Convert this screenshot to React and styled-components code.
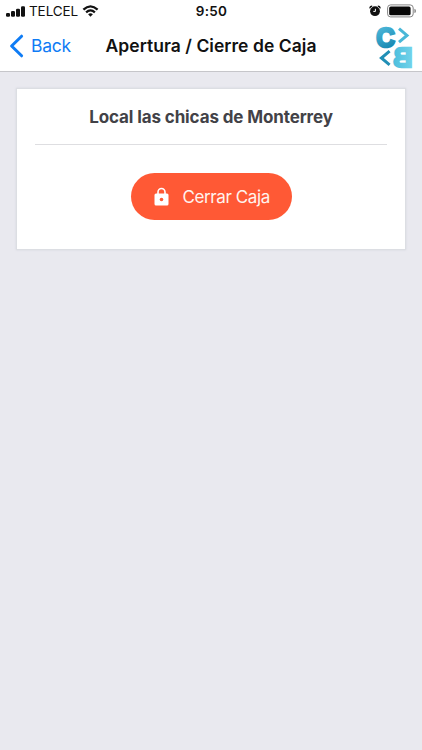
import React from "react";
import styled, { createGlobalStyle } from "styled-components";

const GlobalStyle = createGlobalStyle`
    * {
        box-sizing: border-box;
    }
    body {
        margin: 0;
        background-color: #e9e9ef;
        font-family: Inter, "Liberation Sans", sans-serif;
    }
`

const Screen = styled.div`
    width: 422px;
    height: 750px;
    overflow: hidden;
    background-color: #e9e9ef;
`

const Header = styled.header`
    height: 72px;
    background-color: #fff;
    border-bottom: 1px solid #c6c6ca;
`

const StatusBar = styled.div`
    height: 22px;
    display: grid;
    grid-template-columns: 1fr auto 1fr;
    align-items: center;
    padding: 0 5px 0 6px;
    color: #111;
`

const StatusGroup = styled.div`
    display: flex;
    align-items: center;
    justify-content: ${(props) => props.$end ? "flex-end" : "flex-start"};
    gap: ${(props) => props.$gap};
`

const Label = styled.span`
    display: block;
    white-space: nowrap;
    line-height: 22px;
    font-size: ${(props) => props.$size};
    font-weight: ${(props) => props.$weight || 400};
    letter-spacing: ${(props) => props.$spacing || "0"};
`

const NavBar = styled.nav`
    height: 48px;
    display: grid;
    grid-template-columns: 96px 1fr 96px;
    align-items: center;
    color: #111;

    svg {
        display: block;
    }
`

const BackButton = styled.button`
    display: flex;
    align-items: center;
    gap: 7px;
    padding: 0 0 0 9px;
    border: none;
    background: none;
    font-family: inherit;
    color: #0f7cf5;
    cursor: pointer;
`

const Title = styled.h1`
    margin: 0;
    text-align: center;
`

const Brand = styled.div`
    justify-self: end;
    margin-right: 7px;
`

const Card = styled.section`
    margin: 16px 16px 0;
    height: 162px;
    padding: 0 18px;
    display: flex;
    flex-direction: column;
    align-items: center;
    background-color: #fff;
    border: 1px solid #dcdee3;
    box-shadow: 0 0 2px #d3d5dc;
`

const CardTitle = styled.h2`
    width: 100%;
    height: 56px;
    margin: 0;
    padding-top: 17px;
    text-align: center;
    color: #424247;
    border-bottom: 1px solid #dedee1;
`

const CloseButton = styled.button`
    width: 161px;
    height: 47px;
    margin-top: 28px;
    padding: 0 0 0 23px;
    display: flex;
    align-items: center;
    gap: 14px;
    border: none;
    border-radius: 24px;
    background-color: #ff5935;
    color: #fff3ee;
    font-family: inherit;
    cursor: pointer;
`

function SignalIcon() {
    return (
        <svg width="19" height="11" viewBox="0 0 19 11" fill="#111">
            <rect x="0" y="7" width="4" height="3.8" rx="1.2" />
            <rect x="5" y="5" width="4" height="5.8" rx="1.2" />
            <rect x="10" y="2.8" width="4" height="8" rx="1.2" />
            <rect x="15" y="0.2" width="4" height="10.6" rx="1.2" />
        </svg>
    );
}

function WifiIcon() {
    return (
        <svg width="17" height="12" viewBox="0 0 16 12" fill="none" stroke="#111" strokeWidth="2.3">
            <path d="M0.9 4.6 Q8 -1.9 15.1 4.6" />
            <path d="M3.6 7.4 Q8 3.4 12.4 7.4" />
            <path d="M5.6 9.2 Q8 7.2 10.4 9.2 L8 11.7 Z" fill="#111" stroke="none" />
        </svg>
    );
}

function AlarmIcon() {
    return (
        <svg width="12" height="12" viewBox="0 0 12 12" fill="#111">
            <circle cx="6" cy="6.2" r="4.9" />
            <path d="M1 3.4 Q0.9 1.2 3.2 1.1 M8.8 1.1 Q11.1 1.2 11 3.4" fill="none" stroke="#111" strokeWidth="1.4" />
            <path d="M6.4 3.8 V6.4 H4.3" fill="none" stroke="#fff" strokeWidth="1" />
        </svg>
    );
}

function BatteryIcon() {
    return (
        <svg width="30" height="14" viewBox="0 0 30 14">
            <rect x="0.6" y="0.9" width="25.6" height="12" rx="3" fill="#fff" stroke="#777" strokeWidth="0.9" />
            <rect x="2.2" y="2.5" width="21.4" height="8.8" rx="1.6" fill="#080808" />
            <path d="M27.4 4.8 Q29 5.2 29 6.9 Q29 8.6 27.4 9 Z" fill="#888" />
        </svg>
    );
}

function BackIcon() {
    return (
        <svg width="15" height="24" viewBox="0 0 15 24" fill="none" stroke="#0f7cf5" strokeWidth="3" strokeLinecap="round" strokeLinejoin="round">
            <path d="M12.6 2.2 L2.6 12 L12.6 21.8" />
        </svg>
    );
}

function LockIcon() {
    return (
        <svg width="15" height="19" viewBox="0 0 15 19">
            <path d="M4 8 V5 A3.5 3.5 0 0 1 11 5 V8" fill="none" stroke="#fff" strokeWidth="1.6" />
            <rect x="0.5" y="6.4" width="14" height="12.1" rx="1.5" fill="#fff" />
            <circle cx="7.5" cy="12.5" r="1.8" fill="#ff5935" />
        </svg>
    );
}

function BrandLogo() {
    return (
        <svg width="40" height="46" viewBox="0 0 40 46" overflow="visible" fontFamily="'Liberation Sans', Arial, sans-serif" fontWeight="700">
            <defs>
                <linearGradient id="brandC" x1="0" y1="0" x2="0.3" y2="1">
                    <stop offset="0" stopColor="#5cc4e4" />
                    <stop offset="1" stopColor="#1687b0" />
                </linearGradient>
                <linearGradient id="brandB" x1="0" y1="0" x2="1" y2="0">
                    <stop offset="0" stopColor="#72d3ea" />
                    <stop offset="1" stopColor="#4dbedd" />
                </linearGradient>
            </defs>
            <text x="1.2" y="24.2" fontSize="28.5" textLength="18.6" lengthAdjust="spacingAndGlyphs" fill="url(#brandC)" stroke="url(#brandC)" strokeWidth="2.6">C</text>
            <path d="M24 5.6 L32 12.4 L24 19.2" fill="none" stroke="#49b7d7" strokeWidth="3" />
            <path d="M14.6 28.2 L6.4 35 L14.6 41.8" fill="none" stroke="#218fb6" strokeWidth="3" />
            <text transform="translate(37.6 43.6) scale(-1 1)" fontSize="27.5" textLength="19.4" lengthAdjust="spacingAndGlyphs" fill="url(#brandB)" stroke="url(#brandB)" strokeWidth="2.4">B</text>
        </svg>
    );
}

function App() {
    return (
        <Screen>
            <GlobalStyle />
            <Header>
                <StatusBar>
                    <StatusGroup $gap="4px">
                        <SignalIcon />
                        <Label $size="13.5px" $spacing="-0.1px">TELCEL</Label>
                        <WifiIcon />
                    </StatusGroup>
                    <Label $size="13.5px" $weight={600} $spacing="0.3px">9:50</Label>
                    <StatusGroup $end $gap="6px">
                        <AlarmIcon />
                        <BatteryIcon />
                    </StatusGroup>
                </StatusBar>
                <NavBar>
                    <BackButton>
                        <BackIcon />
                        <Label $size="17.5px" $spacing="-0.25px">Back</Label>
                    </BackButton>
                    <Title>
                        <Label $size="17.5px" $weight={600} $spacing="0.04px">Apertura / Cierre de Caja</Label>
                    </Title>
                    <Brand>
                        <BrandLogo />
                    </Brand>
                </NavBar>
            </Header>
            <Card>
                <CardTitle>
                    <Label $size="17px" $weight={700} $spacing="-0.12px">Local las chicas de Monterrey</Label>
                </CardTitle>
                <CloseButton>
                    <LockIcon />
                    <Label $size="17px" $spacing="-0.4px">Cerrar Caja</Label>
                </CloseButton>
            </Card>
        </Screen>
    );
}

export default App;
